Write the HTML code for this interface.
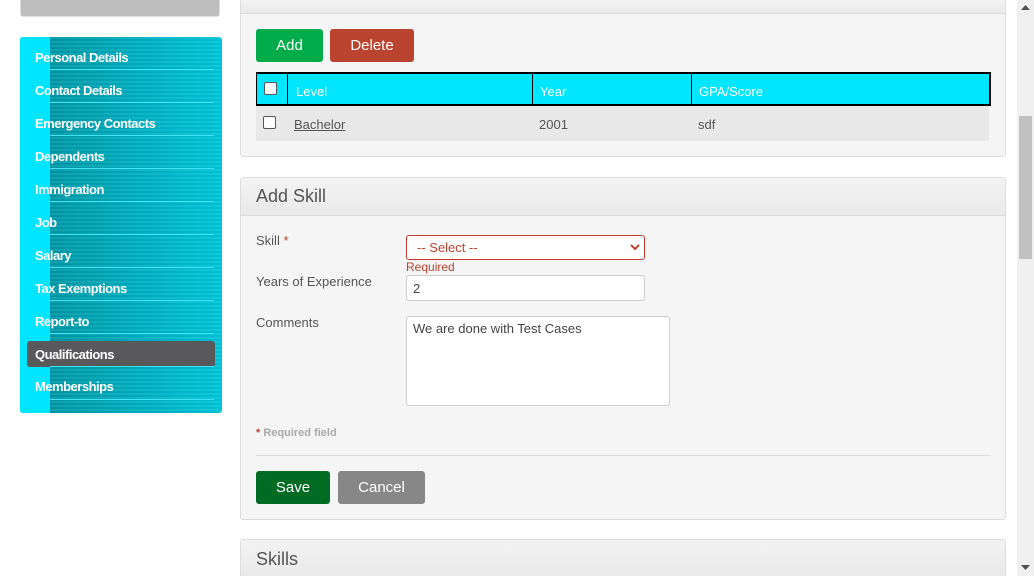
<!DOCTYPE html>
<html style="width:1034px;height:576px;overflow:hidden"><head><meta charset="utf-8">
<style>
*{box-sizing:border-box;margin:0;padding:0}
body{width:1034px;height:576px;overflow:hidden;background:#fff;font-family:"Liberation Sans",Arial,sans-serif;font-size:13px;color:#555;position:relative}
.abs{position:absolute}
.top{left:20px;top:0;width:200px;height:17px;background:#bdbdbd;border:1px solid #ddd;border-top:none;border-radius:0 0 3px 3px}
.side{left:20px;top:37px;width:202px;height:376px;border-radius:3px;overflow:hidden;
background:repeating-linear-gradient(180deg,rgba(255,255,255,.06) 0 2px,rgba(0,0,0,.04) 2px 4px),linear-gradient(90deg,#00919f,#00c6da)}
.strip{left:0;top:0;width:30px;height:100%;background:#00e5ff}
.item{position:absolute;left:0;width:202px;height:33px;color:#fff;font-weight:bold;font-size:13px;line-height:20px;padding:11px 0 0 15px;letter-spacing:-.5px}
.item:after{content:"";position:absolute;left:30px;right:8px;bottom:0;height:1px;background:#3fe3f3}
.sel{position:absolute;left:7px;top:304px;width:188px;height:26px;background:#59595b;border-radius:3px}
.panel{position:absolute;left:240px;width:766px;background:#f5f5f5;border:1px solid #ddd;border-radius:3px;overflow:hidden}
.ph{position:absolute;left:0;right:0;top:0;height:38px;background:linear-gradient(#f3f3f3,#e9e9e9);border-bottom:1px solid #dcdcdc;font-size:18px;color:#555;padding:8px 15px}
.btn{position:absolute;height:33px;border-radius:3px;color:#fff;font-size:15px;text-align:center;line-height:33px}
.lbl{position:absolute;left:15px;font-size:13px;color:#555}
.inp{position:absolute;left:165px;background:#fff;border:1px solid #ccc;border-radius:3px;font-size:13px;color:#444}
.sb{left:1017px;top:0;width:17px;height:576px;background:#f0f0f0}
</style></head><body>
<div class="abs top"></div>
<div class="abs side">
<div class="abs strip"></div>
<div class="sel"></div>
<div class="item" style="top:0">Personal Details</div>
<div class="item" style="top:33px">Contact Details</div>
<div class="item" style="top:66px">Emergency Contacts</div>
<div class="item" style="top:99px">Dependents</div>
<div class="item" style="top:132px">Immigration</div>
<div class="item" style="top:165px">Job</div>
<div class="item" style="top:198px">Salary</div>
<div class="item" style="top:231px">Tax Exemptions</div>
<div class="item" style="top:264px">Report-to</div>
<div class="item" style="top:297px">Qualifications</div>
<div class="item" style="top:330px;padding-top:10px">Memberships</div>
</div>

<div class="panel" style="top:-1px;height:158px">
<div class="ph" style="height:14px;padding:0"></div>
<div class="btn" style="left:15px;top:29px;width:67px;background:#00ac4a">Add</div>
<div class="btn" style="left:89px;top:29px;width:84px;background:#bb4430">Delete</div>
<div class="abs" style="left:15px;top:72px;width:735px;height:34px;background:#00e6ff;border:1px solid #000;border-width:2px 2px 2px 1px"></div>
<div class="abs" style="left:46px;top:72px;width:1px;height:34px;background:#000"></div>
<div class="abs" style="left:291px;top:72px;width:1px;height:34px;background:#000"></div>
<div class="abs" style="left:450px;top:72px;width:1px;height:34px;background:#000"></div>
<div class="abs" style="left:23px;top:82px;width:13px;height:13px;background:#fff;border:1px solid #555;border-radius:2px"></div>
<div class="abs" style="left:55px;top:84px;color:#fff;font-size:13px">Level</div>
<div class="abs" style="left:299px;top:84px;color:#fff;font-size:13px">Year</div>
<div class="abs" style="left:458px;top:84px;color:#fff;font-size:13px">GPA/Score</div>
<div class="abs" style="left:15px;top:106px;width:733px;height:35px;background:#e8e8e8"></div>
<div class="abs" style="left:22px;top:116px;width:13px;height:13px;background:#fff;border:1px solid #555;border-radius:2px"></div>
<div class="abs" style="left:53px;top:117px;text-decoration:underline;color:#555">Bachelor</div>
<div class="abs" style="left:298px;top:117px">2001</div>
<div class="abs" style="left:457px;top:117px">sdf</div>
</div>

<div class="panel" style="top:177px;height:343px">
<div class="ph">Add Skill</div>
<div class="lbl" style="top:55px">Skill <span style="color:#bb4430">*</span></div>
<div class="inp" style="top:57px;width:239px;height:25px;border-color:#c0392b;color:#bb4430;padding:4px 10px">-- Select --
<svg style="position:absolute;right:4px;top:7px" width="10" height="8" viewBox="0 0 10 8"><path d="M1 2l4 4 4-4" stroke="#bb4430" stroke-width="2" fill="none"/></svg></div>
<div class="abs" style="left:165px;top:82px;font-size:12px;color:#bb4430">Required</div>
<div class="lbl" style="top:96px">Years of Experience</div>
<div class="inp" style="top:97px;width:239px;height:26px;padding:5px 6px">2</div>
<div class="lbl" style="top:137px">Comments</div>
<div class="inp" style="top:138px;width:264px;height:90px;padding:4px 6px">We are done with Test Cases</div>
<div class="abs" style="left:15px;top:249px;font-size:11px;color:#aaa;font-weight:bold"><span style="color:#bb4430">*</span> Required field</div>
<div class="abs" style="left:15px;top:277px;width:734px;height:1px;background:#ddd"></div>
<div class="btn" style="left:15px;top:293px;width:74px;background:#006b23;line-height:34px">Save</div>
<div class="btn" style="left:97px;top:293px;width:87px;background:#878787;line-height:34px">Cancel</div>
</div>

<div class="panel" style="top:539px;height:37px;border-bottom:none;border-radius:3px 3px 0 0">
<div class="ph" style="padding-top:9px">Skills</div>
</div>

<div class="abs sb">
<div class="abs" style="left:2px;top:116px;width:13px;height:143px;background:#c1c1c1"></div>
<svg class="abs" style="left:4px;top:5px" width="9" height="5"><path d="M0 5L4.5 0 9 5z" fill="#505050"/></svg>
<svg class="abs" style="left:4px;top:565px" width="9" height="5"><path d="M0 0L4.5 5 9 0z" fill="#505050"/></svg>
</div>
</body></html>
